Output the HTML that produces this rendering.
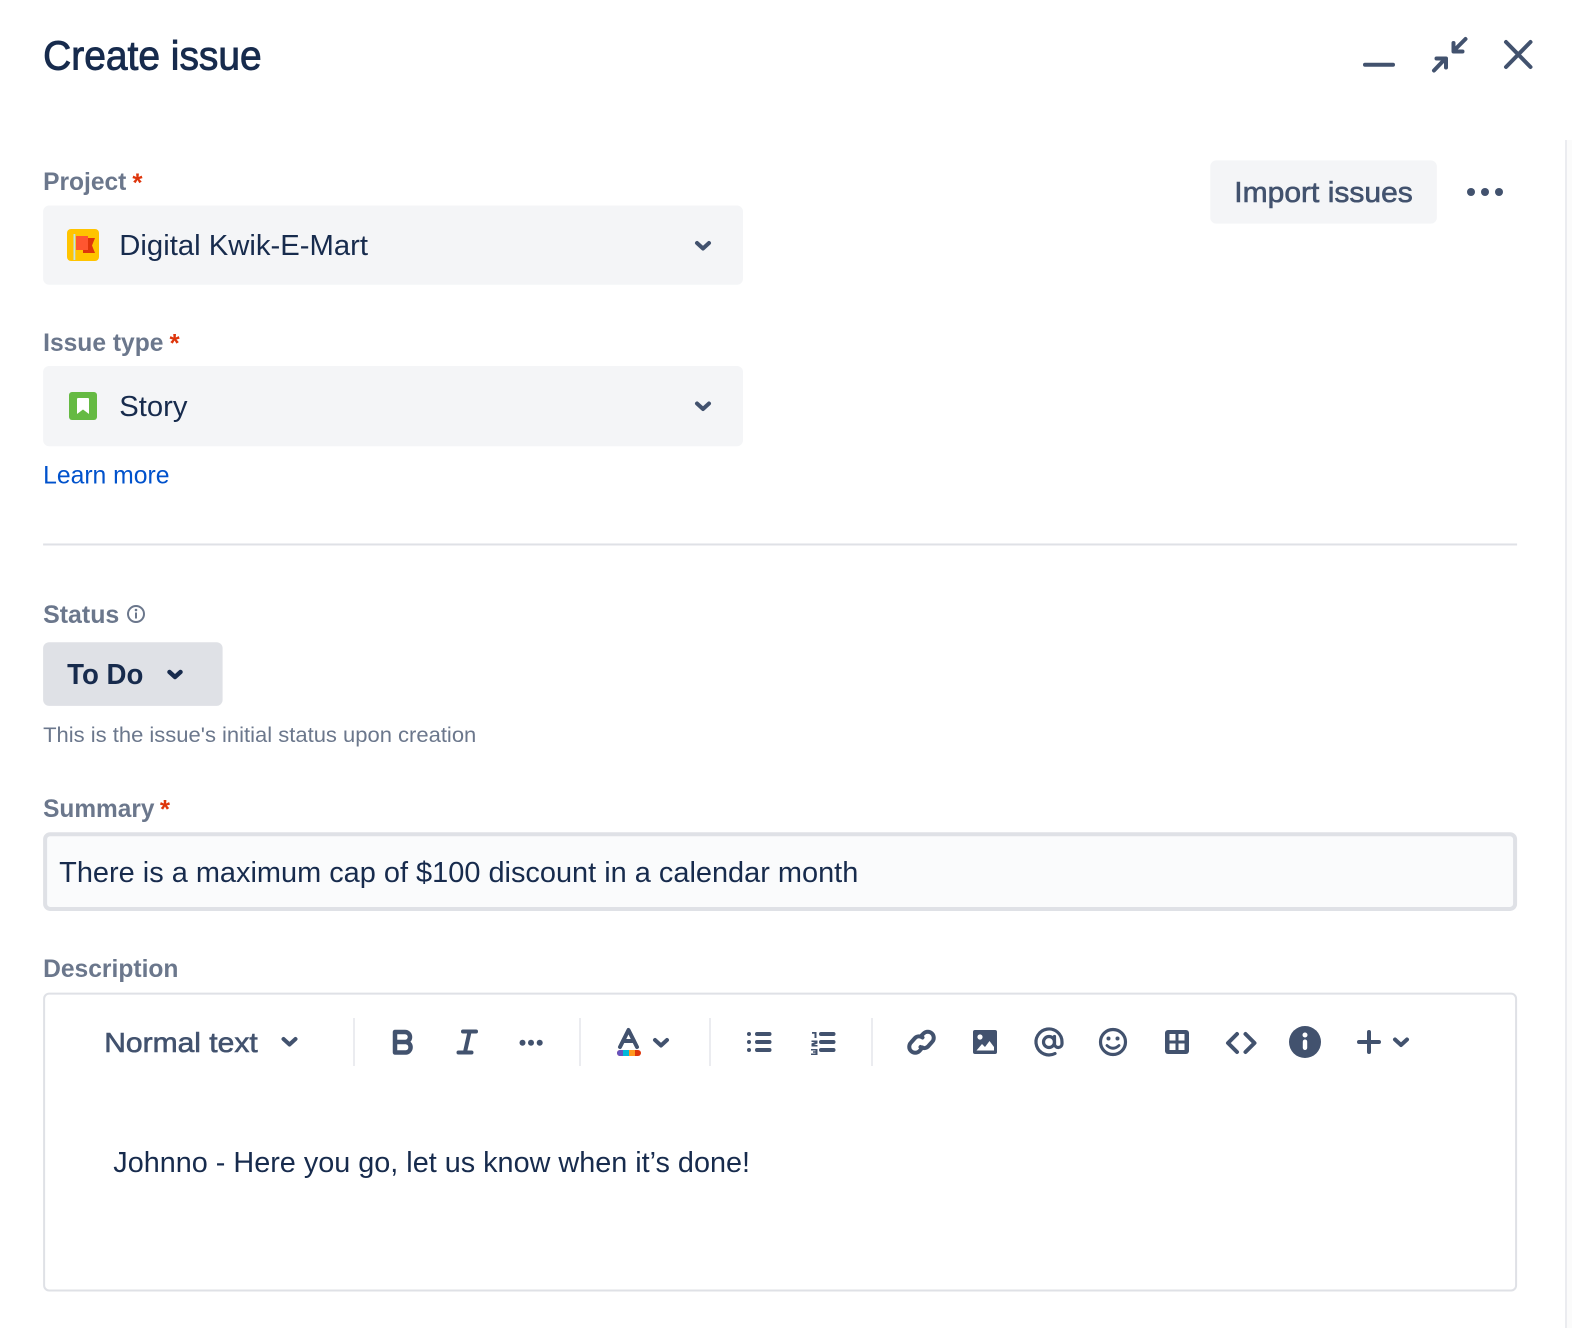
<!DOCTYPE html>
<html lang="en">
<head>
<meta charset="utf-8">
<title>Create issue</title>
<style>
html,body{margin:0;padding:0;background:#fff;width:1572px;height:1328px;overflow:hidden}
svg{display:block}
text{font-family:"Liberation Sans",sans-serif}
.lab{font-size:25px;font-weight:700;fill:#6B778C}
.ast{font-size:26px;font-weight:700;fill:#DE350B}
.val{font-size:28.500px;fill:#172B4D}
.med{stroke-width:.6px}
.ic{fill:none;stroke:#42526E;stroke-width:3.500;stroke-linecap:round;stroke-linejoin:round}
.ch{stroke-width:4}
.f{fill:#42526E}
</style>
</head>
<body>
<svg width="1572" height="1328" viewBox="0 0 1572 1328" xmlns="http://www.w3.org/2000/svg">
<rect x="1567" y="140" width="5" height="1188" fill="#FBFBFB"/>
<rect x="1565" y="140" width="2" height="1188" fill="#EBECF0"/>
<g transform="scale(1.0027)">
<text x="43" y="69.500" font-size="41" fill="#172B4D" stroke="#172B4D" stroke-width=".9" textLength="218" lengthAdjust="spacingAndGlyphs">Create issue</text>
<text class="lab" x="43" y="189.500" textLength="83" lengthAdjust="spacingAndGlyphs">Project</text>
<text class="ast" x="132" y="191">*</text>
<rect x="43" y="205" width="698" height="79" rx="6" fill="#F4F5F7"/>
<text class="val" x="119" y="254.500" textLength="248" lengthAdjust="spacingAndGlyphs">Digital Kwik-E-Mart</text>
<text class="lab" x="43" y="350" textLength="120" lengthAdjust="spacingAndGlyphs">Issue type</text>
<text class="ast" x="169" y="351">*</text>
<rect x="43" y="365" width="698" height="80" rx="6" fill="#F4F5F7"/>
<text class="val" x="119" y="415" textLength="68" lengthAdjust="spacingAndGlyphs">Story</text>
<text x="43" y="482" font-size="25" fill="#0052CC" textLength="126" lengthAdjust="spacingAndGlyphs">Learn more</text>
<rect x="43" y="542" width="1470" height="2" fill="#DFE1E6"/>
<text class="lab" x="43" y="621.500" textLength="76" lengthAdjust="spacingAndGlyphs">Status</text>
<rect x="43" y="640.500" width="179" height="63.500" rx="6" fill="#DFE1E6"/>
<text x="67" y="682" font-size="28.500" font-weight="700" fill="#172B4D" textLength="76" lengthAdjust="spacingAndGlyphs">To Do</text>
<text x="43" y="740" font-size="21" fill="#6B778C" textLength="432" lengthAdjust="spacingAndGlyphs">This is the issue's initial status upon creation</text>
<text class="lab" x="43" y="815" textLength="111" lengthAdjust="spacingAndGlyphs">Summary</text>
<text class="ast" x="159.500" y="816">*</text>
<rect x="45" y="832" width="1466" height="74.500" rx="5" fill="#FAFBFC" stroke="#DFE1E6" stroke-width="4"/>
<text class="val" x="59" y="879.500" textLength="797" lengthAdjust="spacingAndGlyphs">There is a maximum cap of $100 discount in a calendar month</text>
<text class="lab" x="43" y="974.500" textLength="135" lengthAdjust="spacingAndGlyphs">Description</text>
<rect x="44" y="991" width="1468" height="296" rx="5" fill="#fff" stroke="#DFE1E6" stroke-width="2"/>
<text class="med" x="104" y="1049" font-size="27.500" fill="#42526E" stroke="#42526E" textLength="153" lengthAdjust="spacingAndGlyphs">Normal text</text>
<text class="val" x="113" y="1169" textLength="635" lengthAdjust="spacingAndGlyphs">Johnno - Here you go, let us know when it’s done!</text>
<rect x="1207" y="160" width="226" height="63" rx="6" fill="#F4F5F7"/>
<text class="med" x="1231" y="201.500" font-size="28.500" fill="#42526E" stroke="#42526E" textLength="178" lengthAdjust="spacingAndGlyphs">Import issues</text>
</g>

<!-- header icons -->
<path class="ic ch" d="M1365 64.700H1393"/>
<path class="ic ch" d="M1465.500 39L1454 50.500M1453.500 43V51.500H1462.500M1434 70.500L1445 59M1436.500 58.500H1446V67.500"/>
<path class="ic" style="stroke-width:4" d="M1506 42L1530.500 67M1530.500 42L1506 67"/>
<circle class="f" cx="1471" cy="192" r="4"/><circle class="f" cx="1485" cy="192" r="4"/><circle class="f" cx="1499" cy="192" r="4"/>

<!-- project icon -->
<rect x="67" y="229" width="32" height="32" rx="4" fill="#FFC400"/>
<rect x="73.500" y="234" width="1.800" height="26" fill="#C1E4E8"/>
<path d="M83 238H95L92 245.500L95 253H83Z" fill="#DE350B"/>
<rect x="76" y="236" width="12" height="14" fill="#FF5630"/>
<!-- story icon -->
<rect x="69" y="392" width="28" height="28" rx="3" fill="#65BA43"/>
<path d="M77 399a1 1 0 0 1 1-1h10a1 1 0 0 1 1 1v15l-6-4.500-6 4.500z" fill="#fff"/>
<!-- chevrons -->
<path class="ic ch" d="M697 243L703 248.500L709 243"/>
<path class="ic ch" d="M697 403.500L703 409L709 403.500"/>
<path class="ic" style="stroke:#172B4D;stroke-width:4.500" d="M169.500 672L175 677L180.500 672"/>
<path class="ic ch" d="M283.500 1039L289.500 1044.500L295.500 1039"/>
<!-- status info -->
<circle cx="136" cy="614" r="8" fill="none" stroke="#6B778C" stroke-width="2"/>
<circle cx="136" cy="610" r="1.300" fill="#6B778C"/><rect x="135" y="612.500" width="2" height="6" fill="#6B778C"/>

<!-- toolbar separators -->
<rect x="353" y="1018" width="2" height="48" fill="#EBECF0"/>
<rect x="579" y="1018" width="2" height="48" fill="#EBECF0"/>
<rect x="709" y="1018" width="2" height="48" fill="#EBECF0"/>
<rect x="871" y="1018" width="2" height="48" fill="#EBECF0"/>

<!-- bold -->
<path class="ic" style="stroke-width:4.500" d="M395 1032H405A5 5 0 0 1 405 1042H395ZM395 1042H406A5.300 5.300 0 0 1 406 1052.500H395Z"/>
<!-- italic -->
<path class="ic" style="stroke-width:4" d="M463 1031.500H476M458.500 1052.500H471.500M469.500 1032L465 1052"/>
<!-- more -->
<circle class="f" cx="522.500" cy="1042.700" r="3"/><circle class="f" cx="531" cy="1042.700" r="3"/><circle class="f" cx="539.700" cy="1042.700" r="3"/>
<!-- text color -->
<path class="ic" style="stroke-width:4" d="M620 1047L628.500 1030L637 1047M623 1041H634"/>
<rect x="617" y="1050" width="24" height="6" rx="3" fill="#DE350B"/>
<path d="M620 1050h4v6h-4a3 3 0 0 1 0-6z" fill="#6554C0"/>
<rect x="623" y="1050" width="6" height="6" fill="#00B8D9"/>
<rect x="629" y="1050" width="6" height="6" fill="#FF991F"/>
<path class="ic ch" d="M655 1040L661 1045.500L667 1040"/>
<!-- bullet list -->
<circle class="f" cx="749" cy="1034" r="2"/><circle class="f" cx="749" cy="1042" r="2"/><circle class="f" cx="749" cy="1050" r="2"/>
<path class="ic ch" d="M757 1034H769.500M757 1042H769.500M757 1050H769.500"/>
<!-- numbered list -->
<path class="ic ch" d="M821 1034H833.500M821 1042H833.500M821 1050H833.500"/>
<path class="f" d="M812 1032h4.500v6h-2v-4.300H812zM811.500 1040.500h6v3l-3.500 1.500h3.500v1.500h-6v-3l3.500-1.500h-3.500zM811 1049h6.500v6H811v-1.500h4.500v-.8H813v-1.400h2.500v-.8H811z"/>
<!-- link -->
<g class="ic" style="stroke-width:4">
<path d="M920.500 1036.500L923.500 1033.500A6 6 0 0 1 932 1042L928 1046.500A6 6 0 0 1 920.500 1047"/>
<path d="M922.500 1047.500L919.500 1051A6 6 0 0 1 911 1042.500L915 1038A6 6 0 0 1 922.500 1037.500"/>
</g>
<!-- image -->
<rect class="f" x="973" y="1030" width="24" height="24" rx="2"/>
<circle cx="980" cy="1037" r="2.600" fill="#fff"/>
<path d="M976.500 1050.500L982 1044L985 1047L989.500 1041L994 1047V1050.500Z" fill="#fff"/>
<!-- mention -->
<g class="ic" style="stroke-width:3.200">
<circle cx="1049" cy="1042" r="5.500"/>
<path d="M1054.500 1036.500V1044.500A3.800 3.800 0 0 0 1062 1044V1042A13 13 0 1 0 1055 1053.500"/>
</g>
<!-- emoji -->
<circle class="ic" style="stroke-width:3.200" cx="1113" cy="1042" r="12.500"/>
<circle class="f" cx="1108.500" cy="1038.500" r="2"/><circle class="f" cx="1117.500" cy="1038.500" r="2"/>
<path class="ic" style="stroke-width:2.800" d="M1107 1045.500Q1113 1051 1119 1045.500"/>
<!-- table -->
<rect class="f" x="1165" y="1030" width="24" height="24" rx="3"/>
<rect x="1169.500" y="1034" width="6" height="6.500" fill="#fff"/><rect x="1178.500" y="1034" width="6" height="6.500" fill="#fff"/>
<rect x="1169.500" y="1043.500" width="6" height="6.500" fill="#fff"/><rect x="1178.500" y="1043.500" width="6" height="6.500" fill="#fff"/>
<!-- code -->
<path class="ic" style="stroke-width:4" d="M1237 1034L1228 1043L1237 1052M1245.500 1034L1254.500 1043L1245.500 1052"/>
<!-- info -->
<circle class="f" cx="1305" cy="1042" r="16"/>
<circle cx="1305" cy="1035" r="2.500" fill="#fff"/>
<rect x="1302.800" y="1039.500" width="4.400" height="10.500" rx="2.200" fill="#fff"/>
<!-- plus -->
<path class="ic" style="stroke-width:4" d="M1369 1032V1052M1359 1042H1379"/>
<path class="ic ch" d="M1395 1039.500L1401 1045L1407 1039.500"/>
</svg>
</body>
</html>
